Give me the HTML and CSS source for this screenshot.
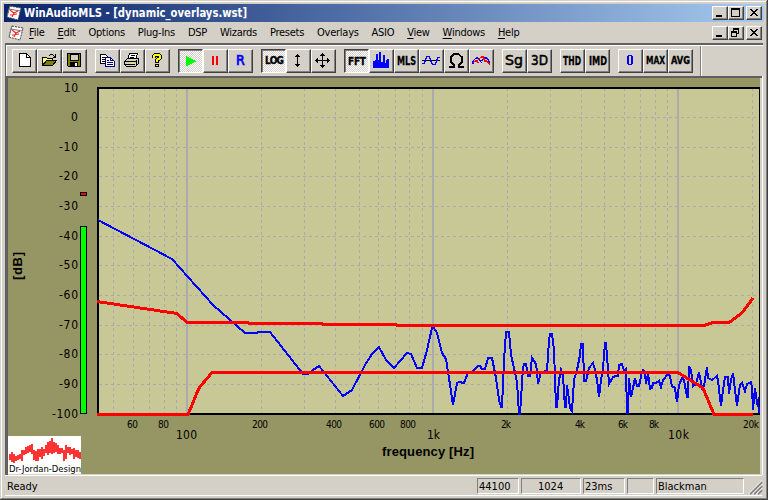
FILE: index.html
```html
<!DOCTYPE html>
<html lang="en">
<head>
  <meta charset="UTF-8">
  <title>WinAudioMLS</title>
  <link rel="stylesheet" href="styles.css">
</head>
<body>
  <svg class="defs" width="0" height="0">
    <symbol id="logo" viewBox="0 0 16 16">
      <path d="M4 1L15 3L12 15L1 12Z" fill="#fff" stroke="#444" stroke-dasharray="2 1"/>
      <path d="M4 1L3 4L14 6L15 3M3 4L1 12" fill="none" stroke="#777"/>
      <path d="M4 5L8 8L12 6M8 8L6 12M4 10L11 9" fill="none" stroke="#f22" stroke-width="1.1"/>
    </symbol>
    <symbol id="min" viewBox="0 0 16 14"><path d="M4 9H10V11H4Z"/></symbol>
    <symbol id="max" viewBox="0 0 16 14"><path d="M3 2H12V11H3ZM4 4V10H11V4Z" fill-rule="evenodd"/></symbol>
    <symbol id="restore" viewBox="0 0 16 14"><path d="M5 2H11V8H9V7H10V4H6V5H5ZM3 5H9V11H3ZM4 7V10H8V7Z" fill-rule="evenodd"/></symbol>
    <symbol id="close" viewBox="0 0 16 14"><path d="M4 3H6V4H7V5H9V4H10V3H12V4H11V5H10V6H9V7H10V8H11V9H12V10H10V9H9V8H7V9H6V10H4V9H5V8H6V7H7V6H6V5H5V4H4Z"/></symbol>
  </svg>
  <div class="window">
    <header class="titlebar">
      <svg class="logo" width="16" height="16"><use href="#logo"/></svg>
      <h1><svg width="240" height="18"><text x="0" y="13" textLength="223" lengthAdjust="spacingAndGlyphs">WinAudioMLS - [dynamic_overlays.wst]</text></svg></h1>
      <div class="controls">
        <button><svg><use href="#min"/></svg></button>
        <button><svg><use href="#max"/></svg></button>
        <button class="close"><svg><use href="#close"/></svg></button>
      </div>
    </header>
    <nav class="menubar">
      <svg class="logo" width="16" height="16"><use href="#logo"/></svg>
      <ul>
        <li><u>F</u>ile</li>
        <li><u>E</u>dit</li>
        <li>Options</li>
        <li>Plug-Ins</li>
        <li>DSP</li>
        <li>Wizards</li>
        <li>Presets</li>
        <li>Overlays</li>
        <li>ASIO</li>
        <li><u>V</u>iew</li>
        <li><u>W</u>indows</li>
        <li><u>H</u>elp</li>
      </ul>
      <div class="controls">
        <button><svg><use href="#min"/></svg></button>
        <button><svg><use href="#restore"/></svg></button>
        <button class="close"><svg><use href="#close"/></svg></button>
      </div>
    </nav>

    <div class="toolbar">
      <div class="group">
        <button><svg><path d="M7.5 4.5H14.5L18.5 8.5V17.5H7.5Z" fill="#fff" stroke="#000"/><path d="M14.5 4.5V8.5H18.5" fill="none" stroke="#000"/></svg></button>
        <button><svg><path d="M5.5 16.5V8.5H9.5L10.5 9.5H15.5V11.5" fill="#ffff80" stroke="#000"/><path d="M5.5 16.5L9.5 11.5H19.5L15.5 16.5Z" fill="#808000" stroke="#000"/><path d="M12 6.5H13M13 5.5H16M16 6.5H17M17 7.5H19M16 8.5H19M18.5 5V9" stroke="#000"/></svg></button>
        <button><svg><path d="M5.5 4.5H18.5V17.5H6.5L5.5 16.5Z" fill="#808000" stroke="#000"/><path d="M8 5H16V11H8Z" fill="#d4d0c8" stroke="#000"/><path d="M8 13H16V17H8Z"/><path d="M13 14H15V17H13Z" fill="#fff"/></svg></button>
      </div>
      <div class="group">
        <button><svg><path d="M5.5 5.5H10.5L13.5 8.5V14.5H5.5Z" fill="#fff" stroke="#000"/><path d="M7 8.5H10M7 10.5H11M7 12.5H11" stroke="#000"/><path d="M10.5 8.5H15.5L19.5 12.5V17.5H10.5Z" fill="#fff" stroke="#000080"/><path d="M15.5 8.5V11.5H19M12 11.5H14M12 13.5H18M12 15.5H18" fill="none" stroke="#000080"/></svg></button>
        <button><svg><path d="M7.5 10.5L9.5 4.5H17.5L15.5 10.5Z" fill="#fff" stroke="#000"/><path d="M11 6.5H15M10 8.5H14" stroke="#000"/><path d="M4.5 12.5L7.5 9.5H18.5V14.5L15.5 17.5H6.5L4.5 15.5Z" fill="#d4d0c8" stroke="#000"/><path d="M5 12.5H16M5 15.5H15M16.5 11V17" stroke="#000"/><path d="M11 14H14V15H11Z" fill="#ff0"/></svg></button>
        <button><svg><path d="M9 9V7L10 6H14L15 7V9L12 11V14M12 15V18" fill="none" stroke="#000" stroke-width="4"/><path d="M9 9V7L10 6H14L15 7V9L12 11V13M12 15.5V17" fill="none" stroke="#ff0" stroke-width="2"/></svg></button>
      </div>
      <div class="group">
        <button class="pressed"><svg><path d="M8 6H9V7H11V8H13V9H15V10H17V11H18V12H16V13H14V14H12V15H10V16H8Z" transform="translate(0 1)" fill="#0f0"/></svg></button>
        <button><svg><path d="M9 7H11V16H9ZM13 7H15V16H13Z" fill="#f00"/></svg></button>
        <button><svg><text class="r" x="8" y="16" textLength="10">R</text></svg></button>
      </div>
      <div class="group">
        <button class="pressed"><svg><text class="px" x="4" y="15" textLength="19">LOG</text></svg></button>
        <button><svg><path d="M11 5H12V18H11ZM10 6H13V7H10ZM9 7H14V8H9ZM9 15H14V16H9ZM10 16H13V17H10Z"/></svg></button>
        <button><svg><path d="M11 4H12V19H11ZM4 11H19V12H4ZM10 5H13V6H10ZM9 6H14V7H9ZM9 16H14V17H9ZM10 17H13V18H10ZM5 10H6V13H5ZM6 9H7V14H6ZM16 9H17V14H16ZM17 10H18V13H17Z"/></svg></button>
      </div>
      <div class="group">
        <button class="pressed"><svg><text class="px" x="4" y="16" textLength="18">FFT</text></svg></button>
        <button><svg><path d="M4 19V12H6V11H7V5H9V11H10V3H12V13H14V6H16V14H17V11H18V10H20V19Z" fill="#00f"/></svg></button>
        <button><svg><text class="px tall" x="3" y="16" textLength="19" lengthAdjust="spacingAndGlyphs">MLS</text></svg></button>
        <button><svg><path d="M3 11.5H21" stroke="#000"/><path d="M3 14.5H5L8 7.5H10L13 14.5L14 15.5H16L18 11L19 8.5H21" fill="none" stroke="#00f" stroke-width="1.4"/></svg></button>
        <button><svg><path d="M5 18H10V16L7 13V8L10 5H14L18 8V13L15 16V18H20" fill="none" stroke="#000" stroke-width="1.6"/></svg></button>
        <button><svg><path d="M4 15V12L7 9H9L12 13L13 14M13 12L15 9H18L20 12V15" fill="none" stroke="#00f" stroke-width="1.4"/><path d="M4 14L6 12H8L9 14M9 11L12 8H14L16 12H18L21 16" fill="none" stroke="#f00" stroke-width="1.4"/></svg></button>
      </div>
      <div class="group">
        <button><svg><text class="big" x="3" y="16" textLength="18" lengthAdjust="spacingAndGlyphs">Sg</text></svg></button>
        <button><svg><text class="big" x="4" y="16" textLength="17" lengthAdjust="spacingAndGlyphs">3D</text></svg></button>
      </div>
      <div class="group">
        <button><svg><text class="px tall" x="3" y="16" textLength="18" lengthAdjust="spacingAndGlyphs">THD</text></svg></button>
        <button><svg><text class="px tall" x="4" y="16" textLength="18" lengthAdjust="spacingAndGlyphs">IMD</text></svg></button>
      </div>
      <div class="group">
        <button><svg><path d="M10 6H14V7H15V15H14V16H10V15H9V7H10ZM11 7V15H13V7Z" fill="#00f" fill-rule="evenodd"/></svg></button>
        <button><svg><text class="px" x="3" y="15" textLength="19" lengthAdjust="spacingAndGlyphs">MAX</text></svg></button>
        <button><svg><text class="px" x="3" y="15" textLength="19" lengthAdjust="spacingAndGlyphs">AVG</text></svg></button>
      </div>
    </div>

    <main>
      <!-- user space starts at the window origin: x 8, y 78 is the corner of the view -->
      <svg class="chart" viewBox="8 78 752 396" width="752" height="396">
        <rect x="98" y="88" width="662" height="326" fill="#c8c896"/>
        <g class="grid">
          <path d="M99 117.5H759M99 147.5H759M99 176.5H759M99 206.5H759M99 236.5H759M99 265.5H759M99 295.5H759M99 325.5H759M99 354.5H759M99 384.5H759"/>
          <path d="M113.5 88V413M133.5 88V413M149.5 88V413M164.5 88V413M176.5 88V413"/>
          <path d="M261.5 88V413M304.5 88V413M335.5 88V413M359.5 88V413M378.5 88V413M395.5 88V413M409.5 88V413M422.5 88V413"/>
          <path d="M507.5 88V413M550.5 88V413M581.5 88V413M604.5 88V413M624.5 88V413M640.5 88V413M655.5 88V413M667.5 88V413M752.5 88V413"/>
        </g>
        <path class="decade" d="M187 89V413M433 89V413M678 89V413"/>
        <path class="axis" d="M98 413V88H760M97 414H760"/>
        <path d="M759.5 88V414" stroke="#000"/>
        <polyline class="signal" points="98,220 172,259 213,305 245,333 257,333 258,332 270,332 303,374 308,374.5 313,370 319,366 343,396 352,390 365,365 372,354 379,347 386,360 394,368 407,353 411,354 417,368 422,368 427,350 432,328 434,328 437,333 442,353 446,359 449,378 453,405 457,383 459,382 464,383 468,373 473,371 478,366 480,366 482,369 485,369 488,358 492,358 496,378 499,400 501,407 502,407 504,360 506,332 509,332 511,355 514,368 517,382 519,414 520,414 523,368 524,364 526,364 528,376 530,376 532,358 536,364 537,372 538,384 541,372 547,371 549,340 550,334 552,334 554,350 556,407 557,407 559,380 561,370 563,376 565,407 566,407 567,385 568,392 570,408 572,411 574,380 577,370 580,355 581,344 583,344 584,381 586,381 589,368 593,363 595,370 597,380 599,397 601,380 603,368 605,343 606,343 608,370 609,384 613,377 616,376 618,376 619,365 622,364 624,371 626,369 627,413 628,413 629,378 631,397 633,388 635,378 637,386 639,386 642,372 643,370 645,373 646,384 648,373 650,389 652,388 653,383 656,383 659,381 661,387 663,380 668,374 670,376 672,386 675,388 677,402 679,385 682,378 684,380 687,397 688,397 689,366 691,370 693,386 696,384 699,372 702,388 704,386 707,367 708,378 712,380 717,376 718,381 721,406 723,390 725,377 728,377 729,394 731,380 733,373 735,390 737,406 740,385 742,383 745,391 747,384 751,382 752,388 753,410 755,388 757,402 758,400 759,413"/>
        <g class="limit">
          <polyline points="97,301.5 177,313.5 187,322.5 248,322.5 249,323.5 322,323.5 323,324.5 396,324.5 397,325.5 704,325.5 713,322.5 729,322.5 742,313 753,298"/>
          <polyline points="97,414.5 188,414.5 199,388 212,372.5 678,372.5 703,388 714,414.5 753,414.5"/>
        </g>
        <rect class="meter" x="80.5" y="192.5" width="6" height="3" fill="#f00"/>
        <rect class="meter" x="80.5" y="226.5" width="6" height="187" fill="#0f0"/>

        <g class="level">
          <text x="64" y="92" textLength="14">10</text>
          <text x="71" y="121">0</text>
          <text x="59" y="151" textLength="19">-10</text>
          <text x="59" y="180" textLength="19">-20</text>
          <text x="59" y="210" textLength="19">-30</text>
          <text x="59" y="240" textLength="19">-40</text>
          <text x="59" y="269" textLength="19">-50</text>
          <text x="59" y="299" textLength="19">-60</text>
          <text x="59" y="329" textLength="19">-70</text>
          <text x="59" y="358" textLength="19">-80</text>
          <text x="59" y="388" textLength="19">-90</text>
          <text x="52" y="418" textLength="26">-100</text>
          <text x="176" y="439" textLength="21">100</text>
          <text x="427" y="439" textLength="13">1k</text>
          <text x="668" y="439" textLength="21">10k</text>
        </g>
        <g class="minor">
          <text x="127" y="428" textLength="11">60</text>
          <text x="158" y="428" textLength="11">80</text>
          <text x="252" y="428" textLength="16">200</text>
          <text x="326" y="428" textLength="16">400</text>
          <text x="369" y="428" textLength="16">600</text>
          <text x="400" y="428" textLength="16">800</text>
          <text x="501" y="428" textLength="10">2k</text>
          <text x="575" y="428" textLength="10">4k</text>
          <text x="618" y="428" textLength="10">6k</text>
          <text x="649" y="428" textLength="10">8k</text>
          <text x="743" y="428" textLength="16">20k</text>
        </g>
        <text class="caption" x="382" y="456" textLength="92">frequency [Hz]</text>
        <text class="caption" transform="translate(22 280) rotate(-90)" textLength="28">[dB]</text>

        <rect x="8" y="436" width="73" height="38" fill="#fff"/>
        <path class="wave" d="M10 454V460M12 452V462M14 454V463M16 456V461M18 455V460M20 454V459M22 450V461M24 450V455M26 447V454M28 446V453M30 445V452M32 444V454M34 450V460M36 451V461M38 449V461M40 449V457M42 447V459M44 449V456M46 445V453M48 442V455M50 441V453M52 438V454M54 442V453M56 443V452M58 445V454M60 448V454M62 448V453M64 450V461M66 445V459M68 447V453M70 447V455M72 449V454M74 448V459M76 450V457M78 450V458M80 452V459"/>
        <text class="brand" x="9" y="472" textLength="72" lengthAdjust="spacingAndGlyphs">Dr-Jordan-Design</text>
      </svg>
    </main>

    <footer class="statusbar">
      <span class="message">Ready</span>
      <span class="panel rate">44100</span>
      <span class="panel size">1024</span>
      <span class="panel time">23ms</span>
      <span class="panel empty"></span>
      <span class="panel type">Blackman</span>
      <svg class="grip" width="14" height="14"><path d="M2 14L14 2M6 14L14 6M10 14L14 10" stroke="#808080" stroke-width="2"/><path d="M0.500 14L14 0.500M4.500 14L14 4.500M8.500 14L14 8.500" stroke="#fff"/></svg>
    </footer>
  </div>
</body>
</html>
```
FILE: styles.css
```css
* {
  box-sizing: border-box;
}

body {
  margin: 0;
  background: #d4d0c8;
  font-family: "DejaVu Sans Condensed", "DejaVu Sans", sans-serif;
  font-size: 11px;
  color: #000;
}

.defs {
  position: absolute;
}

svg {
  display: block;
  flex: none;
  overflow: visible;
}

.window {
  width: 768px;
  height: 500px;
  display: flex;
  flex-direction: column;
  padding: 4px 4px 0;
  background: #d4d0c8;
  box-shadow: inset -1px -1px #404040, inset 1px 1px #d4d0c8, inset -2px -2px #808080, inset 2px 2px #fff;
}

/* title and menu */
.titlebar {
  height: 18px;
  display: flex;
  align-items: center;
  padding: 0 2px;
  background: linear-gradient(to right, #0a246a, #a6caf0);
}

.titlebar h1 {
  margin: 0 0 0 2px;
  font-size: 11.5px;
  font-weight: bold;
}

.titlebar text {
  fill: #fff;
}

.menubar {
  height: 21px;
  display: flex;
  align-items: center;
  padding: 0 2px 0 4px;
}

.menubar ul {
  display: flex;
  gap: 12.9px;
  margin: 0 0 0 5px;
  padding: 0;
  list-style: none;
  letter-spacing: -0.25px;
}

.menubar u {
  text-underline-offset: 2px;
}

.controls {
  display: flex;
  margin-left: auto;
}

button {
  padding: 0;
  border: 1px solid;
  border-color: #fff #404040 #404040 #fff;
  background: #d4d0c8;
  box-shadow: inset -1px -1px #808080;
  font-family: inherit;
}

.controls button {
  width: 16px;
  height: 14px;
}

.controls svg {
  width: 16px;
  height: 14px;
  margin: -1px;
  shape-rendering: crispEdges;
}

.controls .close {
  margin-left: 2px;
}

/* toolbar */
.toolbar {
  height: 33px;
  display: flex;
  gap: 8px;
  width: 758px;
  margin-left: 1px;
  padding: 4px 0 0 6px;
  border-top: 2px solid #606060;
  border-left: 1px solid #606060;
  box-shadow: inset 1px 1px #fff;
}

.group {
  display: flex;
}

.group:last-child {
  padding-right: 7px;
  margin: -3px 0 0;
  padding-top: 3px;
  border-right: 1px solid #808080;
  box-shadow: 1px 0 #fff;
}

.toolbar button {
  width: 25px;
  height: 24px;
}

.toolbar svg {
  width: 25px;
  height: 24px;
  margin: -1px;
  shape-rendering: crispEdges;
}

.toolbar .pressed {
  border-color: #404040 #fff #fff #404040;
  box-shadow: inset 1px 1px #808080;
  background: repeating-conic-gradient(#fff 0 25%, #d4d0c8 0 50%) 0 0 / 2px 2px;
}

.px {
  font-size: 10px;
  font-weight: bold;
  stroke: #000;
  stroke-width: 0.3px;
}

.tall {
  font-size: 12px;
}

.big {
  font-size: 14px;
  stroke: #000;
  stroke-width: 0.5px;
}

.r {
  font-size: 14px;
  fill: #00f;
  stroke: #00f;
  stroke-width: 0.7px;
}

/* chart */
main {
  width: 757px;
  height: 399px;
  margin-left: 1px;
  border: solid #606060;
  border-width: 2px 0 0 3px;
  box-shadow: 1px 0 #fff;
}

.chart {
  background: #969664;
}

.grid path {
  fill: none;
  stroke: #aaaaaf;
  stroke-dasharray: 3 3;
  shape-rendering: crispEdges;
}

.decade {
  stroke: #aaaaaf;
  stroke-width: 2;
  shape-rendering: crispEdges;
}

.axis {
  fill: none;
  stroke: #000;
  stroke-width: 2;
}

.signal {
  fill: none;
  stroke: #00f;
  stroke-width: 2;
  shape-rendering: crispEdges;
}

.limit {
  fill: none;
  stroke: #f00;
  stroke-width: 3;
  shape-rendering: crispEdges;
}

.meter {
  stroke: #000;
}

.level {
  font-size: 12px;
}

.minor {
  font-size: 10px;
}

.caption {
  font-family: "Liberation Sans", Arial, sans-serif;
  font-size: 13px;
  font-weight: bold;
}

.wave {
  stroke: #f33;
  stroke-width: 2;
}

.brand {
  font-size: 9.5px;
}

/* status bar */
.statusbar {
  height: 21px;
  display: flex;
  gap: 2px;
  margin: 0 2px 0 1px;
  padding: 2px 0 0 2px;
  border-top: 1px solid #fff;
  border-bottom: 1px solid #fff;
  line-height: 17px;
}

.message {
  width: 468px;
}

.panel {
  height: 16px;
  padding-left: 1px;
  border: 1px solid;
  border-color: #808080 #fff #fff #808080;
  line-height: 15px;
}

.rate {
  width: 42px;
}

.size {
  width: 60px;
  padding-left: 16px;
}

.time {
  width: 42px;
}

.empty {
  width: 27px;
}

.type {
  width: 88px;
}

.grip {
  margin: 2px 0 0 2px;
}
```
